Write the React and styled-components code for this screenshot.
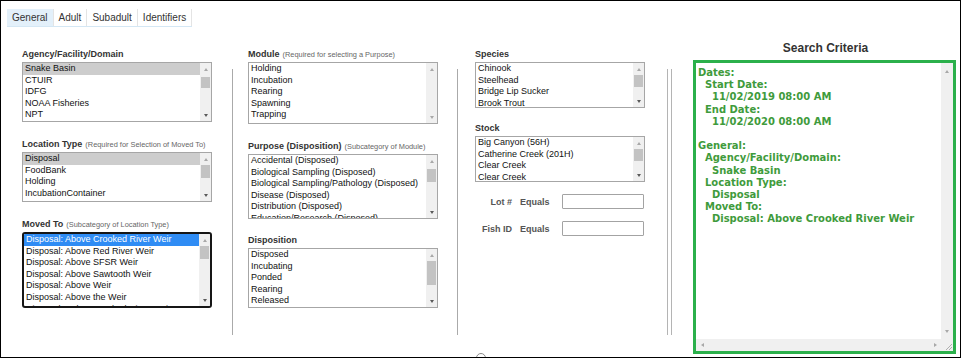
import React from 'react';
import styled, { createGlobalStyle } from 'styled-components';

const GlobalStyle = createGlobalStyle`
  html, body {
    margin: 0;
    padding: 0;
    background: #fff;
  }
  body {
    font-family: "Liberation Sans", Arial, sans-serif;
  }
`;

const Frame = styled.div`
  box-sizing: border-box;
  width: 961px;
  height: 358px;
  border: 1px solid #000;
  overflow: hidden;
  background: #fff;
`;

const TabBar = styled.div`
  display: flex;
  width: fit-content;
  margin: 8px 0 0 6px;
  border-bottom: 1px solid #d4e7f4;
`;

const Tab = styled.div`
  height: 17px;
  line-height: 17px;
  padding: 0 5px;
  font-size: 10px;
  color: #333;
  background: ${p => (p.$active ? '#e3f0fa' : '#fff')};
  border-right: 1px solid #e4e4e4;
`;

const Main = styled.div`
  display: flex;
  align-items: flex-start;
  margin-top: 14px;
  padding-left: 21px;
`;

const Column = styled.div`
  display: flex;
  flex-direction: column;
  width: ${p => p.$width}px;
  margin-left: ${p => p.$offset || 0}px;
  padding-top: 7px;
`;

const Separator = styled.div`
  box-sizing: border-box;
  width: ${p => (p.$double ? 5 : 1)}px;
  height: 266px;
  margin-top: 28px;
  margin-left: ${p => p.$offset}px;
  ${p =>
    p.$double
      ? 'border-left: 1px solid #b4b4b4; border-right: 1px solid #b4b4b4;'
      : 'background: #aaa;'}
`;

const Field = styled.div`
  display: flex;
  flex-direction: column;
  margin-top: ${p => p.$gap || 0}px;
`;

const Label = styled.div`
  height: 12px;
  line-height: 12px;
  margin-bottom: 2px;
  font-size: 9px;
  font-weight: bold;
  color: #333;
  white-space: nowrap;

  small {
    margin-left: 3px;
    font-size: 7.4px;
    font-weight: normal;
    color: #666;
  }
`;

const ListBox = styled.div`
  box-sizing: border-box;
  display: flex;
  height: ${p => p.$height}px;
  border: ${p => (p.$focused ? '2px solid #161616' : '1px solid #a6a6a6')};
  border-radius: ${p => (p.$focused ? 3 : 0)}px;
  background: #fff;
  overflow: hidden;
`;

const Options = styled.div`
  flex: 1;
  overflow: hidden;
`;

const Option = styled.div`
  height: 11.6px;
  line-height: 11.6px;
  padding-left: 2px;
  font-size: 9px;
  white-space: nowrap;
  color: ${p => (p.$sel === 'blue' ? '#fff' : '#111')};
  background: ${p =>
    p.$sel === 'blue' ? '#2f8cf4' : p.$sel === 'gray' ? '#cdcdcd' : 'transparent'};
`;

const VBar = styled.div`
  display: flex;
  flex-direction: column;
  width: ${p => p.$width || 11}px;
  background: #f0f0f0;
`;

const ArrowBox = styled.div`
  display: flex;
  align-items: center;
  justify-content: center;
  height: ${p => p.$size || 12}px;
  width: ${p => (p.$horizontal ? `${p.$size || 12}px` : 'auto')};
  flex-shrink: 0;
`;

const Arrow = styled.span`
  width: 0;
  height: 0;
  ${({ $dir, $color }) => {
    if ($dir === 'up')
      return `border-left: 2.5px solid transparent; border-right: 2.5px solid transparent; border-bottom: 3px solid ${$color};`;
    if ($dir === 'down')
      return `border-left: 2.5px solid transparent; border-right: 2.5px solid transparent; border-top: 3px solid ${$color};`;
    if ($dir === 'left')
      return `border-top: 2.5px solid transparent; border-bottom: 2.5px solid transparent; border-right: 3px solid ${$color};`;
    return `border-top: 2.5px solid transparent; border-bottom: 2.5px solid transparent; border-left: 3px solid ${$color};`;
  }}
`;

const Track = styled.div`
  flex: 1;
`;

const Thumb = styled.div`
  margin: ${p => p.$top}px 1px 0;
  height: ${p => p.$height}px;
  background: #c3c3c3;
`;

const LotRow = styled.div`
  display: grid;
  grid-template-columns: 45px 42px 82px;
  align-items: center;
  margin-top: 12px;
  font-size: 9px;
  font-weight: bold;
  color: #555;
`;

const LotLabel = styled.span`
  padding-right: 8px;
  text-align: right;
`;

const TextInput = styled.div`
  box-sizing: border-box;
  height: 15px;
  border: 1px solid #a3a3a3;
  border-radius: 1px;
  background: #fff;
`;

const Spinner = styled.div`
  box-sizing: border-box;
  width: 10px;
  height: 10px;
  margin: 117px 0 0 1px;
  border: 1.5px solid #8a8a8a;
  border-radius: 50%;
`;

const Panel = styled.div`
  display: flex;
  flex-direction: column;
  width: 263px;
  margin-left: 21px;
`;

const PanelTitle = styled.div`
  height: 14px;
  line-height: 14px;
  text-align: center;
  font-size: 12px;
  font-weight: bold;
  color: #333;
  padding-left: 2px;
`;

const CriteriaBox = styled.div`
  box-sizing: border-box;
  display: grid;
  grid-template-columns: 1fr 12px;
  grid-template-rows: 1fr 12px;
  height: 294px;
  margin-top: 5px;
  border: 3px solid #2bb04b;
  background: #fff;
`;

const CriteriaText = styled.pre`
  margin: 0;
  padding: 4px 2px;
  overflow: hidden;
  font-family: "DejaVu Sans", Verdana, sans-serif;
  font-size: 10px;
  font-weight: bold;
  line-height: 12.2px;
  color: #3f9b3c;
`;

const HBar = styled.div`
  display: flex;
  justify-content: space-between;
  background: #f0f0f0;
`;

const Corner = styled.div`
  display: flex;
  align-items: flex-end;
  justify-content: flex-end;
  background: #f0f0f0;
`;

const LIGHT = '#a8a8a8';
const DARK = '#5a5a5a';

const Scrollbar = ({ thumb }) => (
  <VBar>
    <ArrowBox>
      <Arrow $dir="up" $color={LIGHT} />
    </ArrowBox>
    <Track>{thumb && <Thumb $top={thumb[0]} $height={thumb[1]} />}</Track>
    <ArrowBox>
      <Arrow $dir="down" $color={thumb ? DARK : LIGHT} />
    </ArrowBox>
  </VBar>
);

const List = ({ items, height, selected, selColor = 'gray', thumb, focused }) => (
  <ListBox $height={height} $focused={focused}>
    <Options>
      {items.map((item, i) => (
        <Option key={i} $sel={i === selected ? selColor : null}>
          {item}
        </Option>
      ))}
    </Options>
    <Scrollbar thumb={thumb} />
  </ListBox>
);

const criteria = `Dates:
  Start Date:
    11/02/2019 08:00 AM
  End Date:
    11/02/2020 08:00 AM

General:
  Agency/Facility/Domain:
    Snake Basin
  Location Type:
    Disposal
  Moved To:
    Disposal: Above Crooked River Weir`;

const App = () => {
  return (
    <>
      <GlobalStyle />
      <Frame>
        <TabBar>
          <Tab $active>General</Tab>
          <Tab>Adult</Tab>
          <Tab>Subadult</Tab>
          <Tab>Identifiers</Tab>
        </TabBar>
        <Main>
          <Column $width={190}>
            <Field>
              <Label>Agency/Facility/Domain</Label>
              <List
                height={60}
                selected={0}
                thumb={[2, 11]}
                items={['Snake Basin', 'CTUIR', 'IDFG', 'NOAA Fisheries', 'NPT']}
              />
            </Field>
            <Field $gap={16}>
              <Label>
                Location Type<small>(Required for Selection of Moved To)</small>
              </Label>
              <List
                height={50}
                selected={0}
                thumb={[0, 13]}
                items={['Disposal', 'FoodBank', 'Holding', 'IncubationContainer']}
              />
            </Field>
            <Field $gap={16}>
              <Label>
                Moved To<small>(Subcategory of Location Type)</small>
              </Label>
              <List
                height={76}
                focused
                selected={0}
                selColor="blue"
                thumb={[0, 13]}
                items={[
                  'Disposal: Above Crooked River Weir',
                  'Disposal: Above Red River Weir',
                  'Disposal: Above SFSR Weir',
                  'Disposal: Above Sawtooth Weir',
                  'Disposal: Above Weir',
                  'Disposal: Above the Weir',
                  'Disposal: Below Crooked River Weir',
                ]}
              />
            </Field>
          </Column>

          <Separator $offset={20} />

          <Column $width={190} $offset={15}>
            <Field>
              <Label>
                Module<small>(Required for selecting a Purpose)</small>
              </Label>
              <List
                height={62}
                items={['Holding', 'Incubation', 'Rearing', 'Spawning', 'Trapping']}
              />
            </Field>
            <Field $gap={16}>
              <Label>
                Purpose (Disposition)<small>(Subcategory of Module)</small>
              </Label>
              <List
                height={65}
                thumb={[2, 13]}
                items={[
                  'Accidental (Disposed)',
                  'Biological Sampling (Disposed)',
                  'Biological Sampling/Pathology (Disposed)',
                  'Disease (Disposed)',
                  'Distribution (Disposed)',
                  'Education/Research (Disposed)',
                ]}
              />
            </Field>
            <Field $gap={15}>
              <Label>Disposition</Label>
              <List
                height={60}
                thumb={[0, 24]}
                items={['Disposed', 'Incubating', 'Ponded', 'Rearing', 'Released']}
              />
            </Field>
          </Column>

          <Separator $offset={19} />

          <Column $width={170} $offset={17}>
            <Field>
              <Label>Species</Label>
              <List
                height={46}
                thumb={[0, 12]}
                items={['Chinook', 'Steelhead', 'Bridge Lip Sucker', 'Brook Trout']}
              />
            </Field>
            <Field $gap={14}>
              <Label>Stock</Label>
              <List
                height={46}
                thumb={[0, 12]}
                items={['Big Canyon (56H)', 'Catherine Creek (201H)', 'Clear Creek', 'Clear Creek']}
              />
            </Field>
            <LotRow>
              <LotLabel>Lot #</LotLabel>
              <span>Equals</span>
              <TextInput />
            </LotRow>
            <LotRow>
              <LotLabel>Fish ID</LotLabel>
              <span>Equals</span>
              <TextInput />
            </LotRow>
            <Spinner />
          </Column>

          <Separator $offset={22} $double />

          <Panel>
            <PanelTitle>Search Criteria</PanelTitle>
            <CriteriaBox>
              <CriteriaText>{criteria}</CriteriaText>
              <VBar $width={12}>
                <ArrowBox $size={16}>
                  <Arrow $dir="up" $color={LIGHT} />
                </ArrowBox>
                <Track />
                <ArrowBox $size={16}>
                  <Arrow $dir="down" $color={LIGHT} />
                </ArrowBox>
              </VBar>
              <HBar>
                <ArrowBox $horizontal>
                  <Arrow $dir="left" $color={LIGHT} />
                </ArrowBox>
                <ArrowBox $horizontal>
                  <Arrow $dir="right" $color={LIGHT} />
                </ArrowBox>
              </HBar>
              <Corner>
                <svg width="10" height="10" viewBox="0 0 10 10">
                  <path d="M9 3 L3 9 M9 6 L6 9" stroke="#b0b0b0" strokeWidth="1" />
                </svg>
              </Corner>
            </CriteriaBox>
          </Panel>
        </Main>
      </Frame>
    </>
  );
};

export default App;
